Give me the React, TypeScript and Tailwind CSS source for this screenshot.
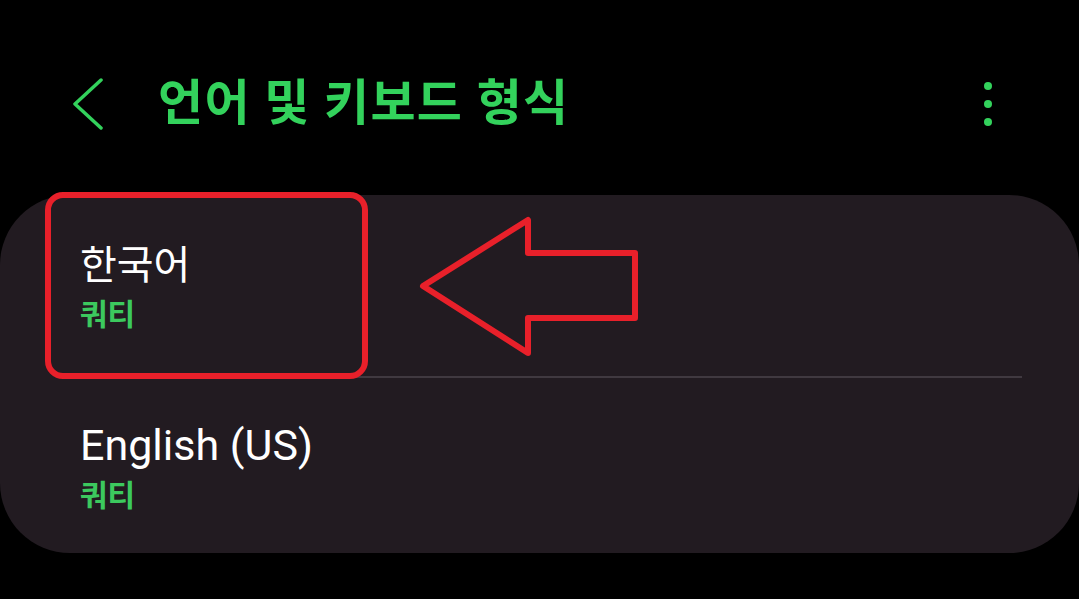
import React from "react";

export default function App() {
  const font = { fontFamily: 'Roboto, "Noto Sans CJK KR", sans-serif' };
  return (
    <div
      className="relative w-[1079px] h-[599px] bg-black overflow-hidden flex flex-col"
      style={font}
    >
      {/* Header */}
      <div className="mt-[48px] h-[112px] flex items-center">
        <svg className="ml-[72px]" width="32" height="52" viewBox="0 0 32 52">
          <polyline
            points="29,2 3,26 29,50"
            fill="none"
            stroke="#33d25c"
            strokeWidth="3.5"
            strokeLinecap="round"
            strokeLinejoin="round"
          />
        </svg>
        <div className="ml-[54px] text-[49px] leading-[58px] font-bold text-[#33d25c] tracking-[1.3px]">
          언어 및 키보드 형식
        </div>
        <div className="ml-auto mr-[87px] flex flex-col gap-[10px]">
          <div className="w-[8px] h-[8px] rounded-full bg-[#33d25c]" />
          <div className="w-[8px] h-[8px] rounded-full bg-[#33d25c]" />
          <div className="w-[8px] h-[8px] rounded-full bg-[#33d25c]" />
        </div>
      </div>

      {/* Card */}
      <div className="mt-[35px] h-[358px] bg-[#221b21] rounded-[70px] flex flex-col">
        <div className="h-[181px] pl-[80px] pt-[48px] flex flex-col">
          <div className="text-[40px] leading-[46px] text-white">한국어</div>
          <div className="mt-[9px] text-[30px] leading-[34px] font-semibold text-[#3cc95e]">
            쿼티
          </div>
        </div>
        <div className="h-[2px] ml-[80px] mr-[57px] bg-[#403940]" />
        <div className="pl-[80px] pt-[42px] flex flex-col">
          <div className="text-[43px] leading-[50px] text-white">
            English (US)
          </div>
          <div className="mt-[9px] text-[30px] leading-[34px] font-semibold text-[#3cc95e]">
            쿼티
          </div>
        </div>
      </div>

      {/* Red annotation box */}
      <div className="absolute left-[45px] top-[192px] w-[323px] h-[187px] border-[6px] border-[#e8202a] rounded-[18px]" />

      {/* Red annotation arrow */}
      <svg
        className="absolute left-[410px] top-[210px]"
        width="240"
        height="160"
        viewBox="410 210 240 160"
      >
        <polygon
          points="423,286 528,220 528,253 635,253 635,318 528,318 528,353"
          fill="none"
          stroke="#e8202a"
          strokeWidth="6"
          strokeLinejoin="round"
        />
      </svg>
    </div>
  );
}
